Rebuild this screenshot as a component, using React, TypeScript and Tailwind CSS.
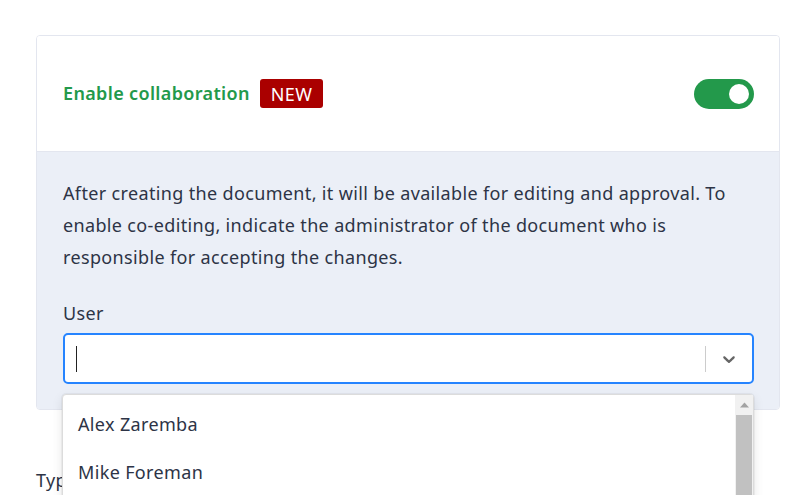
import React from "react";

export default function App() {
  return (
    <div
      className="w-[805px] h-[495px] bg-white overflow-hidden relative tracking-[0.35px]"
      style={{ fontFamily: '"Noto Sans", "Open Sans", sans-serif' }}
    >
      <div className="pt-[35px] pl-[36px] pr-[25px]">
        <div className="border border-[#e3e6ef] rounded-[4px] overflow-hidden">
          <div className="h-[116px] bg-white flex items-center justify-between pl-[26px] pr-[25px] border-b border-[#e3e6ef]">
            <div className="flex items-center gap-[10px]">
              <span className="text-[18px] font-semibold text-[#23994b]">Enable collaboration</span>
              <span className="bg-[#aa0000] text-white text-[18px] leading-none rounded-[3px] px-[11px] h-[29px] flex items-center">NEW</span>
            </div>
            <div className="w-[60px] h-[30px] rounded-full bg-[#23994b] flex items-center justify-end pr-[5px]">
              <div className="w-[20px] h-[20px] rounded-full bg-white" />
            </div>
          </div>
          <div className="bg-[#ebeff7] pl-[26px] pr-[25px] pt-[25px] pb-[25px]">
            <p className="text-[18px] leading-[32px] text-[#2d3446]">
              After creating the document, it will be available for editing and approval. To enable co-editing, indicate the administrator of the document who is responsible for accepting the changes.
            </p>
            <div className="mt-[27px] text-[18px] leading-[26px] text-[#2d3446]">User</div>
            <div className="mt-[7px] h-[51px] bg-white border-2 border-[#2684ff] rounded-[5px] flex items-center">
              <div className="flex-1 pl-[11px] flex items-center">
                <div className="w-[1px] h-[26px] bg-[#222]" />
              </div>
              <div className="w-[1px] h-[26px] bg-[#cccccc]" />
              <div className="w-[46px] flex items-center justify-center">
                <svg width="20" height="20" viewBox="0 0 20 20" fill="#666">
                  <path d="M4.516 7.548c0.436-0.446 1.043-0.481 1.576 0l3.908 3.747 3.908-3.747c0.533-0.481 1.141-0.446 1.574 0 0.436 0.445 0.408 1.197 0 1.615-0.406 0.418-4.695 4.502-4.695 4.502-0.217 0.223-0.502 0.335-0.787 0.335s-0.57-0.112-0.789-0.335c0 0-4.287-4.084-4.695-4.502s-0.436-1.17 0-1.615z" />
                </svg>
              </div>
            </div>
          </div>
        </div>
        <div className="mt-[57px] text-[18px] text-[#2d3446] leading-[26px]">Type</div>
      </div>

      <div className="absolute left-[62px] top-[394px] w-[692px] h-[120px] bg-white rounded-[4px] border border-[#dcdcdc] shadow-[0_0_0_1px_rgba(0,0,0,0.04),0_4px_11px_rgba(0,0,0,0.1)] flex">
        <div className="flex-1 pt-[5px]">
          <div className="h-[48px] flex items-center pl-[15px] text-[18px] text-[#2d3446]">Alex Zaremba</div>
          <div className="h-[48px] flex items-center pl-[15px] text-[18px] text-[#2d3446]">Mike Foreman</div>
        </div>
        <div className="w-[18px] bg-[#f1f1f1] flex flex-col items-center">
          <div className="h-[20px] flex items-center justify-center">
            <svg width="9" height="6" viewBox="0 0 9 6"><path d="M0 5.5 L4.5 0.5 L9 5.5 Z" fill="#a3a3a3" /></svg>
          </div>
          <div className="w-[16px] flex-1 bg-[#c1c1c1]" />
        </div>
      </div>
    </div>
  );
}
